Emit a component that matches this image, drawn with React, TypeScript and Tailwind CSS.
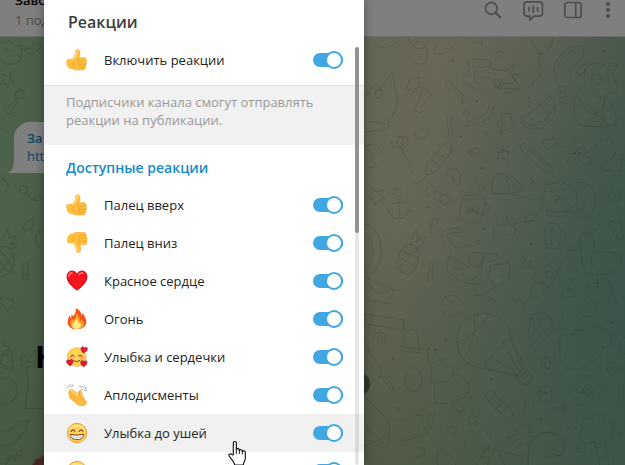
import type { ReactNode } from "react";

const THUMB = (
  <>
    <path
      d="M2 38c0-5 2-7 6-7h10c6-6 10-12 11-22 0-6 3-8 7-7 6 1 7 7 6 13l-2 11h14c5 0 7 3 7 6 0 2-1 4-2 5 3 2 4 8 0 10 2 3 1 8-2 9 1 5-2 7-6 7H31c-5 0-8-2-11-4-12 1-18-8-18-21z"
      fill="#ffbf3c"
      stroke="#f4a32c"
      strokeWidth="1.5"
    />
    <path d="M20 33c7-6 11-13 13-24 0-3 1-4 3-4" stroke="#ffdc77" strokeWidth="4" fill="none" strokeLinecap="round" />
    <path
      d="M37 27c-4 4-2 8 2 9h20M38 37c-4 3-2 8 2 9h19M39 47c-3 3-1 7 2 8h15M22 35c-2 7-1 14 2 19"
      stroke="#e9962c"
      strokeWidth="2"
      fill="none"
      strokeLinecap="round"
    />
  </>
);

const SMILE_FACE = (
  <>
    <circle cx="33" cy="33" r="29" fill="#ffd15a" stroke="#ef9c3c" strokeWidth="3" />
    <path d="M11 26a24 24 0 0 1 44 0" stroke="#ffe58a" strokeWidth="5" fill="none" />
  </>
);

const HEART = "M33 61C23 53 3 39 3 20 3 9 10 3 18 3c7 0 12 4 15 9 3-5 8-9 15-9 8 0 15 6 15 17 0 19-20 33-30 41z";

const EMOJI: Record<string, ReactNode> = {
  up: THUMB,
  down: <g transform="matrix(1 0 0 -1 2 64)">{THUMB}</g>,
  heart: (
    <>
      <path d={HEART} fill="#f5131d" stroke="#a80f1c" strokeWidth="2.5" />
      <path d="M9 19c0-7 4-10 9-10M39 13c3-4 7-5 11-4" stroke="#ff8a8a" strokeWidth="4" fill="none" strokeLinecap="round" />
    </>
  ),
  fire: (
    <>
      <path
        d="M31 64C14 64 5 54 5 42c0-8 3-12 5-20 2 3 4 6 4 9 3-2 2-8 3-14 2 3 4 6 4 9 6-7 10-15 8-25 11 4 17 12 18 22 2-3 2-6 1-9 8 7 12 18 13 28 0 13-12 22-30 22z"
        fill="#f5521e"
      />
      <path d="M32 63c-13 0-20-8-19-18 0-6 3-9 4-14 3 2 4 4 4 7 6-4 10-13 9-23 8 6 12 15 12 25 2-1 4-4 4-7 5 5 8 10 8 15 0 9-8 15-22 15z" fill="#ffa128" />
      <path d="M32 63c-9 0-14-5-13-12 1-6 9-9 11-20 7 5 8 12 8 17 2-1 3-3 4-5 5 10 2 20-10 20z" fill="#ffe98a" />
    </>
  ),
  hearts: (
    <>
      <circle cx="32" cy="33" r="28" fill="#ffd452" stroke="#f0a336" strokeWidth="2" />
      <circle cx="17" cy="35" r="7" fill="#ffa85a" />
      <circle cx="47" cy="35" r="7" fill="#ffa85a" />
      <path d="M15 30q5-7 10 0M37 30q5-7 10 0M23 44q9 7 18 0" stroke="#774018" strokeWidth="3" fill="none" strokeLinecap="round" />
      <path d={HEART} transform="translate(45 0) rotate(10) scale(.33)" fill="#e01b35" stroke="#a70f2a" strokeWidth="4" />
      <path d={HEART} transform="translate(0 41) rotate(-6) scale(.33)" fill="#e01b35" stroke="#a70f2a" strokeWidth="4" />
      <path d={HEART} transform="translate(43 42) rotate(4) scale(.33)" fill="#e01b35" stroke="#a70f2a" strokeWidth="4" />
    </>
  ),
  clap: (
    <>
      <path d="M4 12l3-4M11 6l2-4M17 8l4-5M41 7l4 2M50 8l4 2M47 15l4 3M56 18l5 2M58 12l4 1" stroke="#77818d" strokeWidth="2.5" strokeLinecap="round" />
      <path
        d="M12 17c3-3 6-1 9 1l16 12 2-8c1-4 6-4 7 0l4 14c2 6 9 12 11 18 2 5-4 11-10 12-7 1-14-2-19-6L11 42c-3-3-1-6 1-6l-4-5c-2-3 0-6 2-6-2-3 0-6 2-8z"
        fill="#ffb944"
        stroke="#f0a032"
        strokeWidth="1.5"
      />
      <path d="M15 26l17 14M12 36l17 13" stroke="#e9932d" strokeWidth="1.5" strokeLinecap="round" />
      <path d="M39 24l2 10c2 10 10 14 14 20" stroke="#e9932d" strokeWidth="1.5" fill="none" strokeLinecap="round" />
      <path d="M15 20l20 15" stroke="#ffd97e" strokeWidth="4" fill="none" strokeLinecap="round" />
    </>
  ),
  grin: (
    <>
      {SMILE_FACE}
      <path d="M15 28q6-9 11 0M40 28q6-9 11 0" stroke="#71401d" strokeWidth="3.5" fill="none" strokeLinecap="round" />
      <path d="M13 37q20 5 40 0c0 10-8 16-20 16s-20-6-20-16z" fill="#fff" stroke="#75421d" strokeWidth="3" />
      <path d="M15 44q18 4 36 0M23 39v10M33 39v13M43 39v10" stroke="#b9aa9b" strokeWidth="1.5" fill="none" />
    </>
  ),
  think: SMILE_FACE,
};

const REACTIONS = [
  { icon: "up", label: "Палец вверх" },
  { icon: "down", label: "Палец вниз" },
  { icon: "heart", label: "Красное сердце" },
  { icon: "fire", label: "Огонь" },
  { icon: "hearts", label: "Улыбка и сердечки" },
  { icon: "clap", label: "Аплодисменты" },
  { icon: "grin", label: "Улыбка до ушей", hovered: true },
  { icon: "think", label: "" },
];

function ReactionRow({ icon, label, hovered }: { icon: string; label: string; hovered?: boolean }) {
  return (
    <label className={`flex h-[38px] shrink-0 cursor-pointer items-center pr-[21px] pl-[22px] ${hovered ? "bg-[#f1f1f1]" : ""}`}>
      <svg viewBox="0 0 66 66" className="size-[22px] shrink-0" fill="none" aria-hidden>
        {EMOJI[icon]}
      </svg>
      <span className="ml-4 flex-1 text-[13px] leading-5 text-[#222]">{label}</span>
      <input
        type="checkbox"
        role="switch"
        aria-label={label || "Реакция"}
        defaultChecked
        className="relative h-[14px] w-[30px] cursor-pointer appearance-none rounded-full bg-[#b5b5b5] after:absolute after:-top-[2px] after:left-0 after:size-[18px] after:rounded-full after:border-2 after:border-[#b5b5b5] after:bg-white checked:bg-[#40a7e3] checked:after:left-3 checked:after:border-[#40a7e3]"
      />
    </label>
  );
}

function Wallpaper() {
  return (
    <svg
      viewBox="0 37 625 428"
      preserveAspectRatio="xMinYMin slice"
      className="absolute inset-0 h-full w-full"
      fill="none"
      stroke="#32502f"
      strokeOpacity=".17"
      strokeLinecap="round"
      strokeLinejoin="round"
      aria-hidden
    >
      {/* left strip */}
      <g transform="scale(.3333)" strokeWidth="4">
        <path d="M-5 135c15-15 40-12 50 2 18-4 24 10 18 24 4 18-8 30-24 30-20 6-38-6-44-20M18 152q6-5 10 2M48 165l12 8M80 160c20 8 38-8 45-28M72 148c12 4 22-6 30-18M10 222l10 8 12-8-2 14 12 8-14 4-4 14-9-12-14 2 8-12zM18 320c-10-2-10 14 0 14 0 12 16 12 16 0l22-38c12 4 22-6 14-14 4-12-12-16-16-6-8 0-10 10-4 16l-22 30zM22 395c-10-18-28-10-26 8M6 540l12-14" />
        <path d="M60 560c-4 14 6 22 18 20l20 20c14 6 28 0 28-16M78 580c8-12 0-26-14-22M98 600c14-14 22-12 34-8M72 690c-6-20 14-32 28-32 4 18-4 34-22 32l-6 10M10 540c18 6 22 30 2 34M135 690c-24 0-36 24-24 42 6 12 16 12 24 10M5 722c6-14 14-30 16-36 6 10 8 18 6 30 10-8 18-10 20-8-2 12-10 20-18 24 14-2 20 2 20 6-10 8-20 8-26 6M-5 740c20-6 40 2 46 30s-12 60-46 62M0 750l38 50M-4 780l28 36M40 765l-40 54M68 792l18-2-2 20 2 26-18 4 2-24zM68 800l18 8M70 822l16 8M22 898c-8-16-30-4-18 14l18 20 18-14c10-16-8-26-18-20z" />
        <path d="M10 1030l6 10 12-4-4 12 10 8-12 2-2 12-8-8-12 4M0 1090c8-20 10-44 30-40 12 10 4 34 10 56zM0 1090l-6 10 44 12M-5 1140c24-16 56 0 56 30s-24 48-56 42M64 1065l20 10 24-24v42l-24-10-20 16zM82 1100c-6 30 10 60-2 80l-4 46h60M85 1100l50-4M-5 1290c20 10 50-4 60-20 8-6 22-10 30-6-8 26-14 40-26 50-16 22-40 26-64 20M18 1370l30 10M5 1386c6 8 22 8 20-4l28-16c8 6 14 0 10-6 6-6 0-14-6-8-6 0-8 6-6 10l-30 16" />
      </g>
      {/* right side, top */}
      <g transform="translate(415 0) scale(.3333)" strokeWidth="3">
        <path d="M-20 112c6 30 30 40 50 30M0 125c30-5 40 20 37 45s-20 26-37 20M60 160c20 12 44-6 60-30M55 155c8-10 6-30 20-36M165 112l10 18 14-8 12 12-2-22M247 162a10 10 0 1 1 14 10l-6 6M348 118c8 26 24 42 36 42 16-4 30-22 30-48M370 164h14l-6-6zM376 166c-14 24 14 44 2 58s-28 16-26 34M418 218c-10-30 30-76 62-80 30-4 32 22 14 42-20 22-60 64-76 38zM430 205c-4-22 30-50 48-54" />
        <path d="M158 190c0-20 70-16 70 0s-70 18-70 0zM158 192l4 30c-20 10-30 20-10 28l56 28M228 192v14l42 8 28-22c4 8-12 16-14 32 18 10 28 30 28 44l-70-4c-12-30-24-40-36-30M180 212c-8 14 0 34 14 40M240 250c-8-16 10-18 8-6 8-12 16-2 6 8l-6 10zM294 232c-8-14 8-16 8-6 4-12 14-2 6 6l-8 10zM250 264c14-20 46-18 54 0 0 20-46 20-54 0" />
        <path d="M95 242c-8 20 4 30 18 34s24 18 30 36M105 240c6 14 8 24 24 30s18 24 12 40M22 270c4-8 16-4 16 6 14 0 16 12 4 16l-22 30c4 14-8 22-14 12-12 2-12-12-2-14zM222 316c0 20-16 34-30 38s-36 10-42 26M234 318c2 22-8 38-32 48l-50 16M432 258l22 2-6 16 8 14-4 20-20-4 4-18-6-10zM436 276l12-4M436 292l14 2" />
        <path d="M318 352c30-12 66-40 86-66 24 28 24 60-4 84s-66 26-82-6M318 352c20 38 72 36 98-34M346 358h8M370 340h8M368 364h10M398 336l8 4M394 310l6 4M145 342a9 9 0 1 1 10 8M262 344c18-12 34 4 26 18 18 4 14 24-6 24l-16 4-6 12-4-16c-20-16-6-24 8-22-10-8-6-14-2-20M2 392c-14 14 6 30 18 26 14-4 26-24 12-32-10-6-14 0-18 8M92 346c14 10-4 24 6 36s-6 20 6 34M104 346c14 10-2 24 6 34s-4 24 4 36" />
        <path d="M510 210c14-30 62-24 68 0 24 8 22 40 28 46 2 22-18 26-28 28-6 14-34 6-42-2M510 210c-14-16 2-22 4-24M510 210c-8 30 20 34-20 64-20 40-18 100 20 104s60 4 92-4c8-30-10-60-30-84M580 204c4-16 18-20 26-10-2 16-14 20-24 14M510 212c-12 16-30 26-28 14 0-16 16-32 30-32M486 284c20 70 82 80 86 0M530 234c0-18 24-20 28 0s-26 24-28 0zM576 222q8 10 2 20M536 340c16 10 34 12 28 32-14 12-40 8-60 2M536 272q10 10 16-2M566 294c0 40-10 60 10 80" />
        <path d="M384 430c-2-12 14-18 20-8 8-12 24-8 22 4-4 12-22 18-26 22-10-6-14-12-16-18zM314 434l14-4 50 34M314 434l6 18 20 14M70 462c4-20 22-36 34-38 6 12 8 24 2 38M246 440l34 20M262 438v24M280 440l-30 22M165 460c0-20 26-22 30-4M452 440c14 0 24 10 28 22 2-16 18-22 30-16-12 6-14 12-18 18M545 430l-12 30M576 424a9 9 0 1 1 10 8M478 405q6 20-4 30" />
        <circle cx="186" cy="304" r="2" />
        <circle cx="342" cy="295" r="3" />
        <circle cx="567" cy="153" r="3" />
        <circle cx="112" cy="184" r="3" />
        <circle cx="213" cy="400" r="3" />
        <circle cx="138" cy="410" r="3" />
      </g>
      {/* right side, middle */}
      <g transform="translate(415 150) scale(.3333)" strokeWidth="3">
        <path d="M34 74c-6-18-4-30 10-44L70 0M34 74c20-2 32-10 44-26L112 0M34 74C24 96 10 104-10 100M50 30l26 20M64 10l30 16M34 50l20 20M160 0c-4 20 30 30 34 6M246 6l8 8-10 14 20-4 14 8-2-18 6-12-16 4zM318 0l70 64c10 6 26 8 24-14L345 0M335 0l72 54M455 8c20 10 34-4 32-8M490 8c-6 20-20 36-26 36-14-8-2-26 20-38M492 10c-6 30 30 44 38 34 2-16-16-30-38-34zM510 8l24-6M604 6c-10 14-10 20-26 28s-24 20-14 28l24-2c8 28 24 20 30 10M625 14c-30 4-30 50 2 50M611 32q10-10 18 0" />
        <path d="M98 78c-6-24 22-26 32-16 10 8 8 26 4 44-14 4-20-6-14-16-8 0-12-6-8-10M50 106c-20 0-20 28-10 32 10 0 12-10 18-14 10-4 18 4 24 10 24-2 30 12 18 22-14 18-30 6-22-18M58 126l4 22 14 4M144 138c20-4 50-4 64 2 4 24-4 50-10 70-16 10-44 8-60-2-6-20 2-50 6-70zM146 146c20 4 40 6 60-2M206 160c20-4 20 34-6 34M160 168l32 24M158 186l30-16M158 170v24l14-10 18 6v-26M166 128c-8-14 12-16 4-30M186 130c16-16-4-26 0-42M196 128c12-14 8-16 6-24" />
        <path d="M232 126c-4-36 4-58 28-56 30 2 50 20 64 50l-26 8-56 4zM252 72c20 4 30 30 30 50M264 74c20 8 38 30 42 46M322 140c-30-6-60-12-90-10M324 142l36 8M344 86l20 14M352 80v24M364 86l-18 14M44 214l6 18c10-2 24-12 22-24-12-6-22-4-28 6zM44 246l10-30M330 214c6-20 18-32 32-30 8 16-4 32-32 30zM330 214h32M236 238c-6 30 20 44 30 42 26-2 40-28 32-46-14-14-50-16-62 4zM262 216l10 10 4-26 10 24 20-6-8 14 10 10M252 244h2M270 240h2M260 258h2M282 254h2" />
        <path d="M388 104c-4 8 4 22 2 26-20 20-6 50 20 54s60 0 74-30c6-30-14-50-40-54l-4-14-16 14c-10-4-18 4-24 4zM404 124q8-6 14 2M440 120q8 6 14-2M424 136l10 4 8-6M430 140q0 14-12 12M432 140q8 10 16 4M480 98c36-10 60 20 62 50 0 34-20 60-40 56-14-8 12-28 4-50M398 182c-8 12 2 16 12 16h44c12-8 2-18-8-14M458 182c10 14 36 6 46-10M586 126c6-10 14-2 14-2 10-6 14 4 10 12 14 6 4 18-4 16-4 10-14 4-14-2-16 0-12-18-6-24zM594 138l12 4M588 212l14 8 12-10 10 18-6 14 8 22c-20 10-40-4-28-24-20-2-20-16-10-28" />
        <path d="M390 236c2-24 44-20 46 2-2 14 2 22-2 44-4 20-40 18-44 0 4-20-4-30 0-46zM400 244q8 6 14-4M408 256l14 4M408 268v18M424 244l4 8M394 282h10M90 286c-16-20-10-46 10-48 20-4 46-8 48 4-8 10-34 2-48 10-8 12 2 18 10 26l12 14 28-2c16-2 30-22 44-18 0 10-14 14-24 20M108 306c-18 30-18 60 4 70 20 24 60 30 100 24M104 320c24 20 50 20 56 34-10 10-30-4-42 0-8 16 12 26 24 20 10 10 14 22 34 20M164 320c8-24 40-14 40 6 8 20-30 36-44 10zM206 324l4-16 36 4c4 18-10 20-26 24M224 358c2-20 14-16 30-14l28-8c4 20 2 30-2 42 10 14 4 24-14 20-14 14-34 10-38-6-8-14-4-24-4-34zM234 354l8 8M256 378l8 2M178 412l4 24c20 6 30-4 58-26M200 330v40l-30 20" />
        <path d="M328 326l8 8 12-2-4 12 6 10-12-2-10 4v-10l-8-8 10-2zM356 374c20-20 50-36 88-44-12 26-26 54-42 84-14-8-26-20-46-40zM356 370c8-4 16-2 18 2M392 370c2-14 22-8 20 6-6 14-22 10-20-6M374 386c8-4 16 4 10 12M358 396l-10 22c-6 20 10 32 26 26 10-16 16-24 6-40zM494 288c-14-24 10-46 30-34 18 8 12 32 12 44 4 14 40 4 56 10 20-4 30 14 28 20-4 20-28 44-54 46-40 6-60-6-64-34-4-20 0-34-8-52zM494 280l-40 24 40-8M498 274h2M540 306c-16 10-20 40 6 54M590 308l20 24M516 400h34v14M516 404v10M524 402v10M548 376v36M572 374l34 86M456 390l10-4 4 12c-4 16-10 20-18 24M446 430c-8 20 10 16 16 8 10 8 24-4 16-14-6-10-16-10-20 0" />
        <path d="M40 340l16 2-6 18 6 26-16 6-4-10 8-18zM40 360l14 4M78 464c4-24 20-30 34-28 20 4 28 14 34 30M92 444l26 20M222 450c14-10 24 4 20 14M294 446l12 8 10-14 2 14 12 4-8 12M516 462l16-14 10 16" />
        <circle cx="208" cy="236" r="3" />
        <circle cx="346" cy="281" r="3" />
        <circle cx="37" cy="172" r="3" />
        <circle cx="200" cy="54" r="3" />
        <circle cx="550" cy="224" r="3" />
      </g>
      {/* right side, bottom */}
      <g transform="translate(415 310) scale(.3333)" strokeWidth="3">
        <path d="M126 96c-4-50 30-84 78-86 50 0 86 36 84 76l-22 8-6 24c-20-4-22 8-28 26-20 4-20 14-22 32-50-4-80-30-84-80zM128 96c40-14 74-46 94-84M178 14c4 50-6 100-30 132M210 174l98 22M220 180l84 18M268 104l48 84M288 92l34 88M234 142l72 50M290 84l40 90M308 196l18-22 28 24c-4 16-14 24-24 26-12-4-20-12-26-22zM312 204l24-22M320 212l24-22" />
        <path d="M348 24l-10 58 22 40 58-66-12-30M346 26c-2-20 14-8 20-18 8-4 10 0 16 2 14-6 16 4 18 14-16 4-30 4-54 2zM342 88l44-60M350 104l60-62M440 78c10-8 20-6 32-4 4-20 20-18 32-12 4-28 34-22 38-8 22-8 46 10 48 30 0 20-10 28-26 28-4 28-20 42-36 40-14 30-60 30-82 20-16-18-10-40-10-50-8-20-4-34 4-44zM484 98l8 10M510 112q8 12 16-4M470 74c6-14 24-20 34-4" />
        <path d="M40 114l40 32 2 12c20 8 34 20 36 34 30 10 46 26 44 44-6 24-24 36-36 32l-24 14c-20-6-38 4-42-6-4-22 0-40-2-60h-8c-2-20 0-40-2-52-8-12-12-26-8-50zM48 162l30-14M58 216l42-2 16-22M112 280l16 26c10 4 22-4 18-14l-14-24M212 258c4-14 14-16 24-14 12 14 20 26 28 32 20 18 30 30 28 42-8 8-16 8-24 2-20-20-40-34-56-62zM220 276c8-2 18-14 22-24M238 298c10-2 20-14 24-24M254 310c10-2 16-14 20-22M330 272c6 20-2 40-14 52M340 276v18M380 150c-6 24 10 24 24 26 4-16 0-32-12-38l-12 12zM392 138l-2 32 14 6" />
        <path d="M370 246c-4-26 40-26 40-2 2 26-4 38-22 38-18-2-16-22-16-36zM376 244c10 8 20 6 34-2M376 262c4-14 22-16 26 0s-20 18-26 0M468 236l50-40 16 2 28 40-4 10-52 40-14-4-26-42zM484 238c4-16 20-10 20 2s-20 12-20-2zM504 238c4-16 34-14 34 8s-34 22-34-8zM512 244c4-10 18-6 18 4s-16 8-18-4M512 206l8 6M578 184c-12-28 28-36 32-10 0 22-22 26-28 12 0-14 18-16 18-4 0 8-10 8-10 2M612 240l14-16v44l-6-12zM630 82c-24 6-24 40 2 50" />
        <path d="M174 310l6 10 12 2-8 10 2 12-12-4-10 6v-14l-8-10 12-2zM428 292l12 2 12-4-2 14-14 6-8-6zM96 374c-12-24 26-36 28-14-2 18-22 12-18 4M278 384l18-6c2-20 20-32 48-32 4 20-12 44-40 44l-10 12-4-12zM0 310c14 14 38 10 58-4 2 40-20 74-58 78M24 320c-6 18 4 40 20 54M340 466c-4-60 14-96 50-98 40-4 60 20 60 44s-20 24-26 28M388 432l44 4M406 402v6M430 388l4 4M386 440c20 6 30 0 46-4M342 410l-8-12 14-4 2-16 16 2 8-14 14 6 16-10 10 8M336 430l-8 8 10 10M502 392c-14-16-10-30 2-34-12-30 18-44 30-30 6-24 36-18 36 2 24-6 32 20 22 30 8 20-10 36-22 32-10 16-30 10-36 0-10 10-24 8-32 0zM538 396l16 70M570 394l12 72M488 416c-8-20 20-24 24-4s-20 20-24 4z" />
        <path d="M184 464l30-50 28 6 80 20-4 26M196 440l30 6M214 420l-2-14 10-2v14M250 424l20 40M238 420l-20 44M68 464c-6-30 0-48 10-42 24 10 44 24 44 44M0 444l26-12-10-20 12 2 4 18-26 16M78 0c10 26 50 26 58 0M490 0c14 28 50 28 52 0" />
        <circle cx="92" cy="90" r="4" />
        <circle cx="228" cy="208" r="3" />
        <circle cx="377" cy="328" r="3" />
        <circle cx="441" cy="17" r="3" />
        <circle cx="614" cy="372" r="5" />
        <circle cx="222" cy="372" r="5" />
        <circle cx="150" cy="405" r="3" />
        <circle cx="460" cy="355" r="3" />
        <circle cx="590" cy="37" r="3" />
        <circle cx="168" cy="264" r="3" />
      </g>
      {/* strip along the dialog's right edge */}
      <g strokeWidth="1">
        <path d="M374 43c8 7 16 5 22 0M380 90c-8-18-10 12-14 4M380 90c4-7 9-15 12-17 3 8 2 14 4 18 4 18-4 26-8 30 3 6-1 8-6 9l-18 2M375 94c0-6 7-6 7 0s-7 6-7 0M368 122c8-2 12 4 20 2M397 142c0-8 11-7 11 0s-11 7-11 0M366 146c8-4 15 0 15 8" />
        <path d="M410 76l4 4 5-3-1 6 4 4-6 1-2 5-3-4-6 1 3-5zM368 150l6 5-2 6 5 5-8 2M394 137c4-4 12 2 8 8s-12 2-10-4M401 147l8 16 3 10M372 188l5 4 6-3-2 6 4 5-6 0-4 5-2-6-6-2 5-3zM394 194c-2-7 8-8 8-1 0 4-6 5-7 1M398 198l2 20M392 204l14-3M389 210c2 12 18 12 20-1M389 210l-2 4M409 209l3 3" />
        <path d="M399 255c6-18 23-11 19 4-2 14-8 18-14 14-6-2-8-8-5-18zM399 257l18 10M400 250l18 8M417 250l-18 18M412 246c-2-8 2-12 4-16 2 4 2 8 0 12 4-4 8-6 10-5-2 6-6 10-10 12M364 224c20 0 26 46 0 54M364 236c12 0 12 30 0 34M366 278l28 12-6 14-24-5M394 290l-18 3-10-14M366 314l38 6-1 10-38-6zM372 316l-1 9" />
        <path d="M374 338c0-8 12-8 12 0s-8 6-8 0 6-2 4 1M402 346c2-8 2-17 10-17 8 2 4 10 8 20zM402 346l-2 4 20 3M364 342c6 12 12 20 18 30l-4 6 8-2 8 14-4-1-8-11M405 378c2-16 18-12 17 4-2 12-18 14-17-4M366 398l22 22c4 12 0 18 0 28l-22-20M390 418c12 6 26 0 33-8 14 2 4 22-8 28l-16 4M364 446l28-12" />
        <circle cx="393" cy="359" r="1" />
        <circle cx="398" cy="409" r="2" />
        <circle cx="435" cy="350" r="1" />
      </g>
    </svg>
  );
}

export default function App() {
  return (
    <div className="relative flex h-screen flex-col overflow-hidden bg-white font-['Open_Sans',sans-serif]">
      <header className="flex h-[37px] shrink-0 items-end justify-between border-b border-[#d8d8d8] bg-white pr-3 pl-[15px]">
        <div className="pb-[6px]">
          <p className="text-[13px] leading-5 font-semibold text-black">Заво</p>
          <p className="text-[13px] leading-5 text-[#999]">1 под</p>
        </div>
        <div className="flex h-9 items-start text-[#999]">
          <button aria-label="Поиск" className="mr-[19px]">
            <svg width="20" height="22" fill="none" stroke="currentColor" strokeWidth="1.7" strokeLinecap="round">
              <circle cx="8.3" cy="8.5" r="5.8" />
              <path d="M12.6 12.8l4.7 4.7" strokeWidth="2" />
            </svg>
          </button>
          <button aria-label="Видеочат" className="mr-[19px]">
            <svg width="22" height="22" fill="none" stroke="currentColor" strokeWidth="1.7" strokeLinecap="round" strokeLinejoin="round">
              <path d="M5 1.8h12.500a3 3 0 0 1 3 3v8.400a3 3 0 0 1-3 3H12l-4.200 4V16.200H5a3 3 0 0 1-3-3V4.800a3 3 0 0 1 3-3z" />
              <path d="M7 7.500v3.500M11.300 6v6.500M15.600 7.500v3.500" />
            </svg>
          </button>
          <button aria-label="Информация" className="mr-5">
            <svg width="20" height="22" fill="none" stroke="currentColor" strokeWidth="1.7">
              <rect x="1.8" y="2.5" width="16.4" height="15" rx="2.8" />
              <path d="M12.700 2.500v15" />
            </svg>
          </button>
          <button aria-label="Меню">
            <svg width="10" height="22" fill="currentColor">
              <circle cx="5" cy="4" r="2.1" />
              <circle cx="5" cy="10" r="2.1" />
              <circle cx="5" cy="16" r="2.1" />
            </svg>
          </button>
        </div>
      </header>

      <main className="relative flex-1 overflow-hidden bg-[radial-gradient(ellipse_42%_100%_at_104%_68%,#74a892_0%,#74a892cc_30%,transparent_100%),linear-gradient(180deg,transparent_45%,#84a67899_100%),linear-gradient(90deg,#9bc595_0%,#93b98a_14%,#c4c9a0_52%,#d2cfae_70%,#cdccae_86%,#a8b89c_100%)]">
        <Wallpaper />
        <div className="relative mt-[85px] ml-[14px] h-[51px] w-[260px] rounded-t-2xl rounded-br-2xl bg-white px-[13px] py-[7px] text-[13px] leading-[18px] text-[#168acd]">
          <svg viewBox="0 0 8 14" className="absolute bottom-0 -left-[7px] h-[14px] w-2 fill-white" aria-hidden>
            <path d="M8 0v14H0c5-1 7-6 7-14z" />
          </svg>
          <p className="font-semibold">За</p>
          <a href="#chat" className="block">
            htt
          </a>
        </div>
        <p className="relative mt-[165px] ml-[35px] text-[31px] leading-9 font-bold text-black">Н</p>
        <svg viewBox="0 0 30 12" className="absolute bottom-0 left-[32px] h-3 w-[30px] fill-[#914f45]" aria-hidden>
          <path d="M0 12l4-6 5-1 3-4h18v11z" />
        </svg>
        <div className="absolute top-[335px] left-[346px] size-6 rounded-full bg-[#60735c]" />
      </main>

      <div className="absolute inset-0 flex bg-black/50 pl-11">
        <section
          role="dialog"
          aria-labelledby="reactions-title"
          className="relative flex h-full w-80 flex-col overflow-hidden bg-white shadow-[0_0_10px_rgba(0,0,0,0.35)]"
        >
          <h1 id="reactions-title" className="h-[41px] shrink-0 px-6 pt-[11px] text-[16px] leading-[22px] font-semibold text-[#3c3c3c]">
            Реакции
          </h1>
          <ReactionRow icon="up" label="Включить реакции" />
          <p className="mt-[6px] h-[60px] shrink-0 bg-[#f1f1f1] px-[22px] pt-2 pr-10 text-[13px] leading-[18px] text-[#999] shadow-[inset_0_1px_1px_#e0e0e0]">
            Подписчики канала смогут отправлять реакции на публикации.
          </p>
          <h2 className="h-[41px] shrink-0 px-[22px] pt-3 text-[14px] leading-[22px] font-semibold text-[#168acd]">Доступные реакции</h2>
          {REACTIONS.map((reaction) => (
            <ReactionRow key={reaction.icon} {...reaction} />
          ))}
          <div className="absolute top-[47px] right-[5px] bottom-0 w-1 rounded-full bg-black/10">
            <div className="h-[186px] rounded-full bg-[#929292]" />
          </div>
        </section>
      </div>

      <svg viewBox="0 0 54 75" className="absolute top-[441px] left-[228px] h-[25px] w-[18px]" aria-hidden>
        <path
          d="M16 41V6c0-6 9-6 9 0v20c1-5 9-4 9 1v2c1-4 9-4 9 1v2c2-4 9-3 9 2v18c0 8-6 11-6 20H20c0-8-9-15-16-26-4-7 4-10 9-4z"
          fill="#fff"
          stroke="#16161c"
          strokeWidth="3.5"
          strokeLinejoin="round"
        />
        <path d="M25 26v12M34 28v10M43 31v8" stroke="#16161c" strokeWidth="3" strokeLinecap="round" />
      </svg>
    </div>
  );
}
